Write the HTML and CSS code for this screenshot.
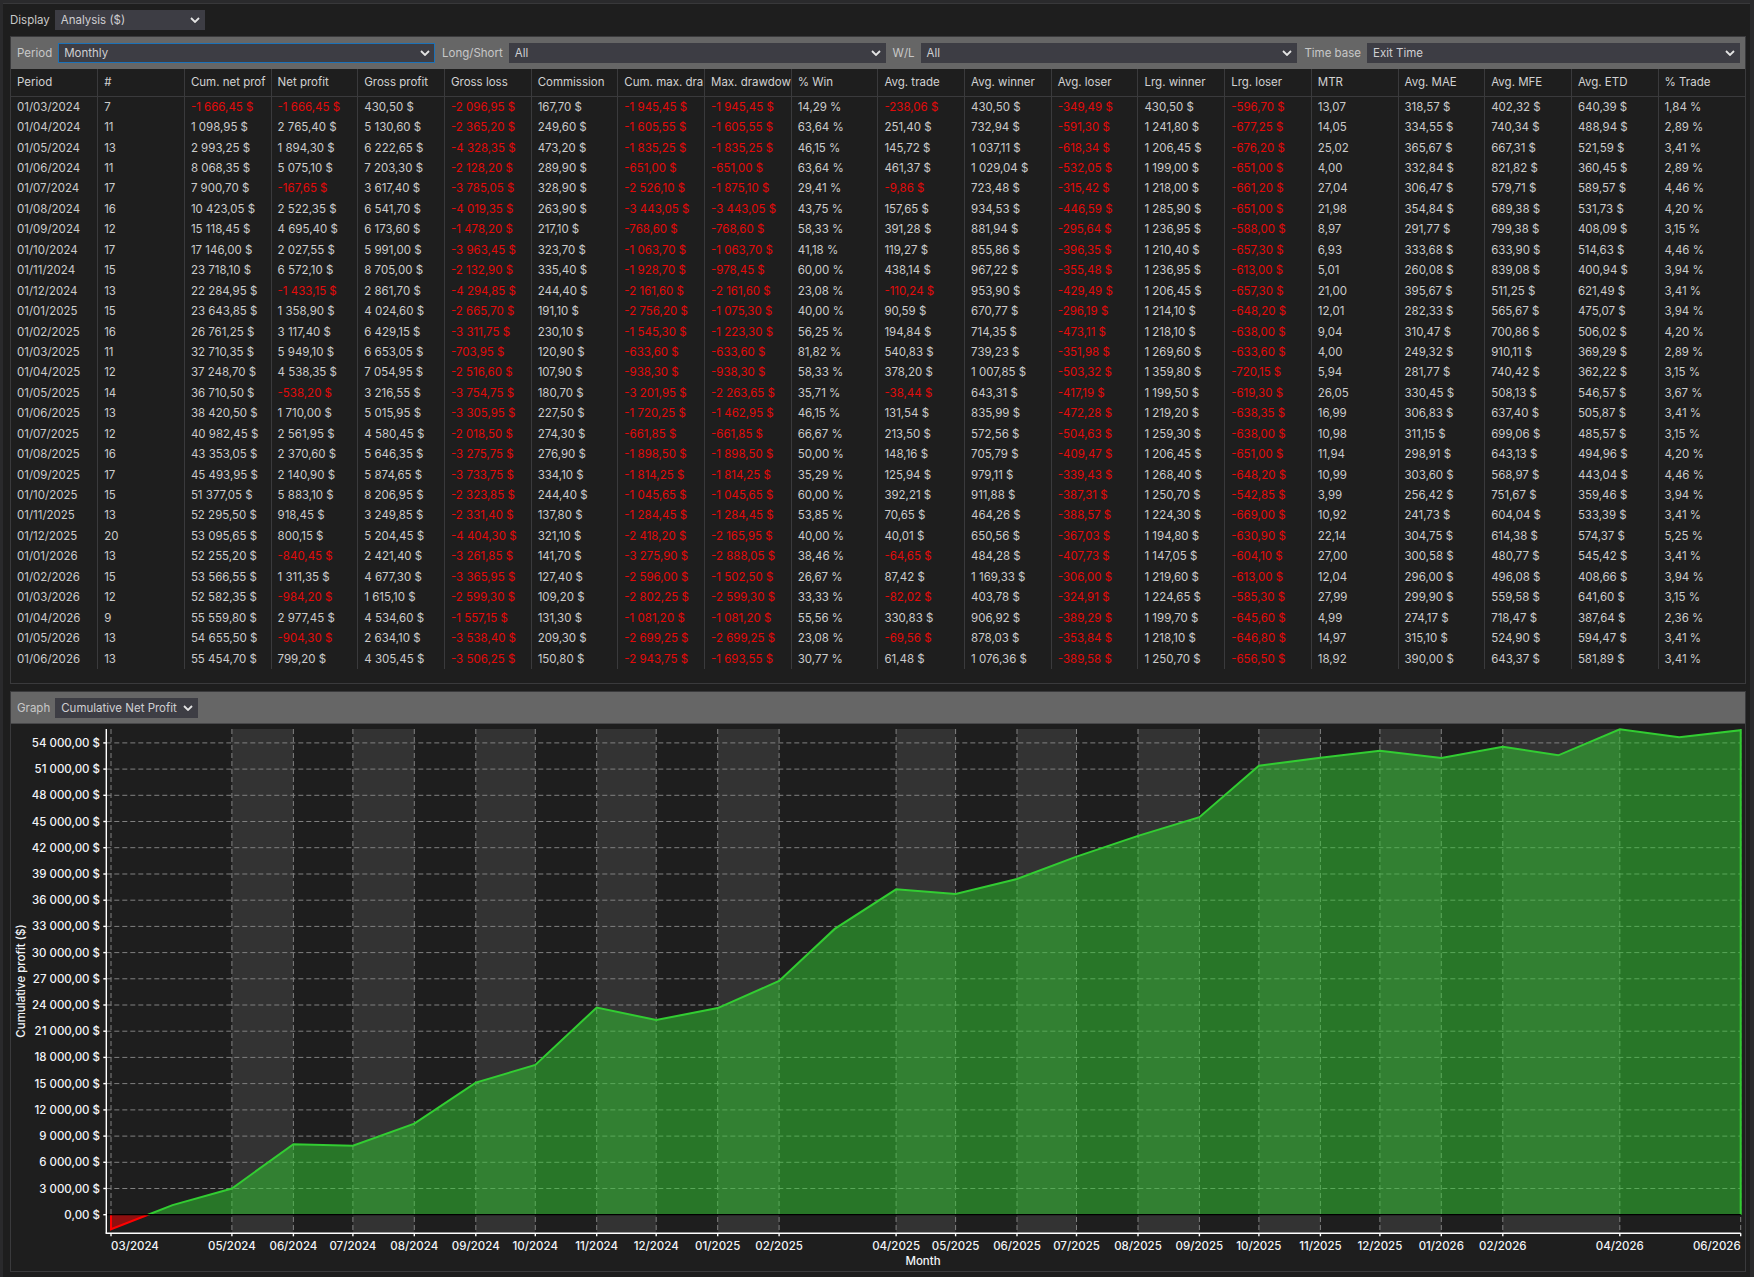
FILE: index.html
```html
<!DOCTYPE html>
<html lang="en">
<head>
    <meta charset="UTF-8">
    <title>Analysis</title>
    <link rel="stylesheet" href="styles.css">
</head>
<body>
    <div class="frame">
        <div class="display-row">
            <span class="label">Display</span>
            <div class="select display-select">
                <span>Analysis ($)</span>
                <svg class="chevron" viewBox="0 0 10 6"><path d="M1 1l4 4 4-4"/></svg>
            </div>
        </div>

        <div class="panel table-panel">
            <div class="toolbar">
                <span class="label">Period</span>
                <div class="select grow focused">
                    <span>Monthly</span>
                    <svg class="chevron" viewBox="0 0 10 6"><path d="M1 1l4 4 4-4"/></svg>
                </div>
                <span class="label after-select">Long/Short</span>
                <div class="select grow">
                    <span>All</span>
                    <svg class="chevron" viewBox="0 0 10 6"><path d="M1 1l4 4 4-4"/></svg>
                </div>
                <span class="label after-select">W/L</span>
                <div class="select grow">
                    <span>All</span>
                    <svg class="chevron" viewBox="0 0 10 6"><path d="M1 1l4 4 4-4"/></svg>
                </div>
                <span class="label after-select">Time base</span>
                <div class="select time-select">
                    <span>Exit Time</span>
                    <svg class="chevron" viewBox="0 0 10 6"><path d="M1 1l4 4 4-4"/></svg>
                </div>
            </div>
            <table class="stats">
                <thead><tr id="statsHead"></tr></thead>
                <tbody id="statsBody"></tbody>
            </table>
        </div>

        <div class="panel graph-panel">
            <div class="toolbar graph-toolbar">
                <span class="label">Graph</span>
                <div class="select graph-select">
                    <span>Cumulative Net Profit</span>
                    <svg class="chevron" viewBox="0 0 10 6"><path d="M1 1l4 4 4-4"/></svg>
                </div>
            </div>
            <svg id="chart" class="chart" viewBox="11 724 1733 547"></svg>
        </div>
    </div>

    <script src="script.js"></script>
</body>
</html>
```

FILE: styles.css
```css
* {
    box-sizing: border-box;
}

body {
    margin: 0;
    height: 1277px;
    overflow: hidden;
    background: #2a2a2c;
    font-family: Inter, "Noto Sans", sans-serif;
    font-size: 11.5px;
    color: #cbcbcb;
}

.frame {
    margin: 3px 4px 0 3px;
    height: 1274px;
    padding: 6px 4px 0 7px;
    background: #1e1e1e;
    border-top: 1px solid #38383a;
}

.display-row {
    display: flex;
    align-items: center;
    gap: 5px;
    height: 20px;
    margin-bottom: 6px;
}

.label {
    white-space: nowrap;
    color: #c8c8c8;
}

.label.after-select {
    margin-left: 1px;
}

.select {
    display: flex;
    align-items: center;
    justify-content: space-between;
    height: 20px;
    padding: 0 5px 0 6px;
    background: #3d3d44;
    color: #cfcfd2;
    white-space: nowrap;
}

.select.grow {
    flex: 1 1 0;
}

.select.focused {
    border: 1px solid #1c72b8;
    padding-left: 5px;
    padding-right: 4px;
}

.display-select {
    width: 150px;
}

.graph-select {
    width: 143px;
}

.time-select {
    flex: 0 0 373px;
}

.chevron {
    width: 10px;
    height: 6px;
    flex: none;
    fill: none;
    stroke: #e4e4e4;
    stroke-width: 1.8;
}

.panel {
    border: 1px solid #3a3a3c;
}

.table-panel {
    height: 648px;
    margin-bottom: 7px;
}

.graph-panel {
    height: 581px;
}

.toolbar {
    display: flex;
    align-items: center;
    gap: 6px;
    height: 32px;
    padding: 0 5px 0 6px;
    background: #666666;
}

.graph-toolbar {
    gap: 5px;
    border-bottom: 1px solid #48484a;
}

.stats {
    width: 100%;
    table-layout: fixed;
    border-collapse: collapse;
}

.stats th {
    height: 27.5px;
    padding: 0 0 2px 6px;
    font-weight: 400;
    text-align: left;
    color: #d2d2d2;
    white-space: nowrap;
    overflow: hidden;
    border-right: 1px solid #3a3a3c;
    border-bottom: 1px solid #3a3a3c;
}

.stats td {
    height: 20.44px;
    padding: 0 0 0 6px;
    white-space: nowrap;
    overflow: hidden;
    border-right: 1px solid #3a3a3c;
}

.stats th:last-child,
.stats td:last-child {
    border-right: none;
}

.stats .loss {
    color: #e30b0b;
}

.chart {
    display: block;
    width: 1733px;
    height: 547px;
}

.band {
    fill: #333333;
}

.grid {
    stroke: #808080;
    stroke-width: 1;
    stroke-dasharray: 5 3;
}

.axis {
    stroke: #ffffff;
    stroke-width: 1.4;
}

.zero-line {
    stroke: #000000;
    stroke-width: 1.2;
}

.fill-up {
    fill: rgba(50, 205, 50, 0.5);
}

.fill-down {
    fill: rgba(255, 0, 0, 0.5);
}

.line-up,
.line-down {
    fill: none;
    stroke-width: 2;
}

.line-up {
    stroke: #32cd32;
}

.line-down {
    stroke: #ff0000;
}

.tick-label,
.axis-title {
    font-family: Inter, "Noto Sans", sans-serif;
    font-size: 11.5px;
    font-weight: 500;
    fill: #f2f4f8;
}
```

FILE: script.js
```js
const headers = ['Period', '#', 'Cum. net prof', 'Net profit', 'Gross profit', 'Gross loss', 'Commission',
    'Cum. max. dra', 'Max. drawdow', '% Win', 'Avg. trade', 'Avg. winner', 'Avg. loser', 'Lrg. winner',
    'Lrg. loser', 'MTR', 'Avg. MAE', 'Avg. MFE', 'Avg. ETD', '% Trade'];

// unit shown after the value, per column
const units = ['', '', ' $', ' $', ' $', ' $', ' $', ' $', ' $', ' %', ' $', ' $', ' $', ' $', ' $', '', ' $', ' $', ' $', ' %'];

const rows = `01/03/2024|7|-1 666,45|-1 666,45|430,50|-2 096,95|167,70|-1 945,45|-1 945,45|14,29|-238,06|430,50|-349,49|430,50|-596,70|13,07|318,57|402,32|640,39|1,84
01/04/2024|11|1 098,95|2 765,40|5 130,60|-2 365,20|249,60|-1 605,55|-1 605,55|63,64|251,40|732,94|-591,30|1 241,80|-677,25|14,05|334,55|740,34|488,94|2,89
01/05/2024|13|2 993,25|1 894,30|6 222,65|-4 328,35|473,20|-1 835,25|-1 835,25|46,15|145,72|1 037,11|-618,34|1 206,45|-676,20|25,02|365,67|667,31|521,59|3,41
01/06/2024|11|8 068,35|5 075,10|7 203,30|-2 128,20|289,90|-651,00|-651,00|63,64|461,37|1 029,04|-532,05|1 199,00|-651,00|4,00|332,84|821,82|360,45|2,89
01/07/2024|17|7 900,70|-167,65|3 617,40|-3 785,05|328,90|-2 526,10|-1 875,10|29,41|-9,86|723,48|-315,42|1 218,00|-661,20|27,04|306,47|579,71|589,57|4,46
01/08/2024|16|10 423,05|2 522,35|6 541,70|-4 019,35|263,90|-3 443,05|-3 443,05|43,75|157,65|934,53|-446,59|1 285,90|-651,00|21,98|354,84|689,38|531,73|4,20
01/09/2024|12|15 118,45|4 695,40|6 173,60|-1 478,20|217,10|-768,60|-768,60|58,33|391,28|881,94|-295,64|1 236,95|-588,00|8,97|291,77|799,38|408,09|3,15
01/10/2024|17|17 146,00|2 027,55|5 991,00|-3 963,45|323,70|-1 063,70|-1 063,70|41,18|119,27|855,86|-396,35|1 210,40|-657,30|6,93|333,68|633,90|514,63|4,46
01/11/2024|15|23 718,10|6 572,10|8 705,00|-2 132,90|335,40|-1 928,70|-978,45|60,00|438,14|967,22|-355,48|1 236,95|-613,00|5,01|260,08|839,08|400,94|3,94
01/12/2024|13|22 284,95|-1 433,15|2 861,70|-4 294,85|244,40|-2 161,60|-2 161,60|23,08|-110,24|953,90|-429,49|1 206,45|-657,30|21,00|395,67|511,25|621,49|3,41
01/01/2025|15|23 643,85|1 358,90|4 024,60|-2 665,70|191,10|-2 756,20|-1 075,30|40,00|90,59|670,77|-296,19|1 214,10|-648,20|12,01|282,33|565,67|475,07|3,94
01/02/2025|16|26 761,25|3 117,40|6 429,15|-3 311,75|230,10|-1 545,30|-1 223,30|56,25|194,84|714,35|-473,11|1 218,10|-638,00|9,04|310,47|700,86|506,02|4,20
01/03/2025|11|32 710,35|5 949,10|6 653,05|-703,95|120,90|-633,60|-633,60|81,82|540,83|739,23|-351,98|1 269,60|-633,60|4,00|249,32|910,11|369,29|2,89
01/04/2025|12|37 248,70|4 538,35|7 054,95|-2 516,60|107,90|-938,30|-938,30|58,33|378,20|1 007,85|-503,32|1 359,80|-720,15|5,94|281,77|740,42|362,22|3,15
01/05/2025|14|36 710,50|-538,20|3 216,55|-3 754,75|180,70|-3 201,95|-2 263,65|35,71|-38,44|643,31|-417,19|1 199,50|-619,30|26,05|330,45|508,13|546,57|3,67
01/06/2025|13|38 420,50|1 710,00|5 015,95|-3 305,95|227,50|-1 720,25|-1 462,95|46,15|131,54|835,99|-472,28|1 219,20|-638,35|16,99|306,83|637,40|505,87|3,41
01/07/2025|12|40 982,45|2 561,95|4 580,45|-2 018,50|274,30|-661,85|-661,85|66,67|213,50|572,56|-504,63|1 259,30|-638,00|10,98|311,15|699,06|485,57|3,15
01/08/2025|16|43 353,05|2 370,60|5 646,35|-3 275,75|276,90|-1 898,50|-1 898,50|50,00|148,16|705,79|-409,47|1 206,45|-651,00|11,94|298,91|643,13|494,96|4,20
01/09/2025|17|45 493,95|2 140,90|5 874,65|-3 733,75|334,10|-1 814,25|-1 814,25|35,29|125,94|979,11|-339,43|1 268,40|-648,20|10,99|303,60|568,97|443,04|4,46
01/10/2025|15|51 377,05|5 883,10|8 206,95|-2 323,85|244,40|-1 045,65|-1 045,65|60,00|392,21|911,88|-387,31|1 250,70|-542,85|3,99|256,42|751,67|359,46|3,94
01/11/2025|13|52 295,50|918,45|3 249,85|-2 331,40|137,80|-1 284,45|-1 284,45|53,85|70,65|464,26|-388,57|1 224,30|-669,00|10,92|241,73|604,04|533,39|3,41
01/12/2025|20|53 095,65|800,15|5 204,45|-4 404,30|321,10|-2 418,20|-2 165,95|40,00|40,01|650,56|-367,03|1 194,80|-630,90|22,14|304,75|614,38|574,37|5,25
01/01/2026|13|52 255,20|-840,45|2 421,40|-3 261,85|141,70|-3 275,90|-2 888,05|38,46|-64,65|484,28|-407,73|1 147,05|-604,10|27,00|300,58|480,77|545,42|3,41
01/02/2026|15|53 566,55|1 311,35|4 677,30|-3 365,95|127,40|-2 596,00|-1 502,50|26,67|87,42|1 169,33|-306,00|1 219,60|-613,00|12,04|296,00|496,08|408,66|3,94
01/03/2026|12|52 582,35|-984,20|1 615,10|-2 599,30|109,20|-2 802,25|-2 599,30|33,33|-82,02|403,78|-324,91|1 224,65|-585,30|27,99|299,90|559,58|641,60|3,15
01/04/2026|9|55 559,80|2 977,45|4 534,60|-1 557,15|131,30|-1 081,20|-1 081,20|55,56|330,83|906,92|-389,29|1 199,70|-645,60|4,99|274,17|718,47|387,64|2,36
01/05/2026|13|54 655,50|-904,30|2 634,10|-3 538,40|209,30|-2 699,25|-2 699,25|23,08|-69,56|878,03|-353,84|1 218,10|-646,80|14,97|315,10|524,90|594,47|3,41
01/06/2026|13|55 454,70|799,20|4 305,45|-3 506,25|150,80|-2 943,75|-1 693,55|30,77|61,48|1 076,36|-389,58|1 250,70|-656,50|18,92|390,00|643,37|581,89|3,41`
    .split('\n').map(line => line.split('|'));

const GROUP = '\u00a0';

function buildTable() {
    document.getElementById('statsHead').innerHTML = headers.map(h => `<th>${h}</th>`).join('');
    document.getElementById('statsBody').innerHTML = rows.map(row => {
        const cells = row.map((value, i) => {
            const text = value.replace(/ /g, GROUP) + units[i];
            const cls = value.startsWith('-') ? ' class="loss"' : '';
            return `<td${cls}>${text}</td>`;
        });
        return `<tr>${cells.join('')}</tr>`;
    }).join('');
}

// plot area, in page pixels
const plot = { left: 106.3, x0: 111, x1: 1740.7, top: 729, bottom: 1233.3, zero: 1214.7, perDollar: 0.008737 };

const dayOf = (month, year) => Date.UTC(year, month - 1, 1) / 86400000;
const firstDay = dayOf(3, 2024);
const lastDay = dayOf(6, 2026);
const xOf = (month, year) => plot.x0 + (dayOf(month, year) - firstDay) * (plot.x1 - plot.x0) / (lastDay - firstDay);
const yOf = value => plot.zero - value * plot.perDollar;
const fmt = n => n.toFixed(1);

function buildChart() {
    const parts = [];
    const tickMonths = ['03/2024', '05/2024', '06/2024', '07/2024', '08/2024', '09/2024', '10/2024', '11/2024', '12/2024',
        '01/2025', '02/2025', '04/2025', '05/2025', '06/2025', '07/2025', '08/2025', '09/2025', '10/2025', '11/2025',
        '12/2025', '01/2026', '02/2026', '04/2026', '06/2026'];
    const ticks = tickMonths.map(label => {
        const [m, y] = label.split('/').map(Number);
        return { label, x: xOf(m, y) };
    });

    // alternating bands between date ticks
    for (let i = 1; i + 1 < ticks.length; i += 2) {
        parts.push(`<rect class="band" x="${fmt(ticks[i].x)}" y="${plot.top}" width="${fmt(ticks[i + 1].x - ticks[i].x)}" height="${plot.bottom - plot.top}"/>`);
    }

    // horizontal grid and value labels
    for (let v = 0; v <= 54000; v += 3000) {
        const y = fmt(yOf(v));
        if (v > 0) parts.push(`<line class="grid" x1="${plot.left}" y1="${y}" x2="${plot.x1}" y2="${y}"/>`);
        parts.push(`<line class="axis" x1="${plot.left - 3}" y1="${y}" x2="${plot.left}" y2="${y}"/>`);
        const whole = Math.floor(v / 1000);
        const text = v === 0 ? '0,00 $' : `${whole} 000,00 $`;
        parts.push(`<text class="tick-label" x="100" y="${fmt(yOf(v) + 4)}" text-anchor="end">${text}</text>`);
    }

    // vertical grid and date labels
    ticks.forEach((t, i) => {
        const x = fmt(t.x);
        parts.push(`<line class="grid" x1="${x}" y1="${plot.top}" x2="${x}" y2="${plot.bottom}"/>`);
        parts.push(`<line class="axis" x1="${x}" y1="${plot.bottom}" x2="${x}" y2="${plot.bottom + 3}"/>`);
        const anchor = i === 0 ? 'start' : i === ticks.length - 1 ? 'end' : 'middle';
        parts.push(`<text class="tick-label" x="${x}" y="1250" text-anchor="${anchor}">${t.label}</text>`);
    });

    // series: first point below zero, the rest above
    const points = rows.map(row => {
        const [, m, y] = row[0].split('/').map(Number);
        return { x: xOf(m, y), y: yOf(parseFloat(row[2].replace(/ /g, '').replace(',', '.'))) };
    });
    const a = points[0], b = points[1];
    const crossX = a.x + (b.x - a.x) * (plot.zero - a.y) / (b.y - a.y);
    const upLine = [[crossX, plot.zero], ...points.slice(1).map(p => [p.x, p.y])];
    const upPath = upLine.map(p => `${fmt(p[0])},${fmt(p[1])}`).join(' ');
    const end = `${fmt(plot.x1)},${plot.zero}`;

    parts.push(`<polygon class="fill-up" points="${upPath} ${end}"/>`);
    parts.push(`<polygon class="fill-down" points="${fmt(a.x)},${plot.zero} ${fmt(a.x)},${fmt(a.y)} ${fmt(crossX)},${plot.zero}"/>`);
    parts.push(`<polyline class="line-up" points="${upPath} ${end}"/>`);
    parts.push(`<polyline class="line-down" points="${fmt(a.x)},${plot.zero} ${fmt(a.x)},${fmt(a.y)} ${fmt(crossX)},${plot.zero}"/>`);
    parts.push(`<line class="zero-line" x1="${plot.left}" y1="${plot.zero}" x2="${plot.x1}" y2="${plot.zero}"/>`);

    // axes
    parts.push(`<line class="axis" x1="${plot.left}" y1="${plot.top}" x2="${plot.left}" y2="${plot.bottom}"/>`);
    parts.push(`<line class="axis" x1="${plot.left - 0.7}" y1="${plot.bottom}" x2="${plot.x1}" y2="${plot.bottom}"/>`);

    parts.push(`<text class="axis-title" x="923" y="1265" text-anchor="middle">Month</text>`);
    parts.push(`<text class="axis-title" transform="translate(25 981) rotate(-90)" text-anchor="middle">Cumulative profit ($)</text>`);

    document.getElementById('chart').innerHTML = parts.join('');
}

buildTable();
buildChart();
```
